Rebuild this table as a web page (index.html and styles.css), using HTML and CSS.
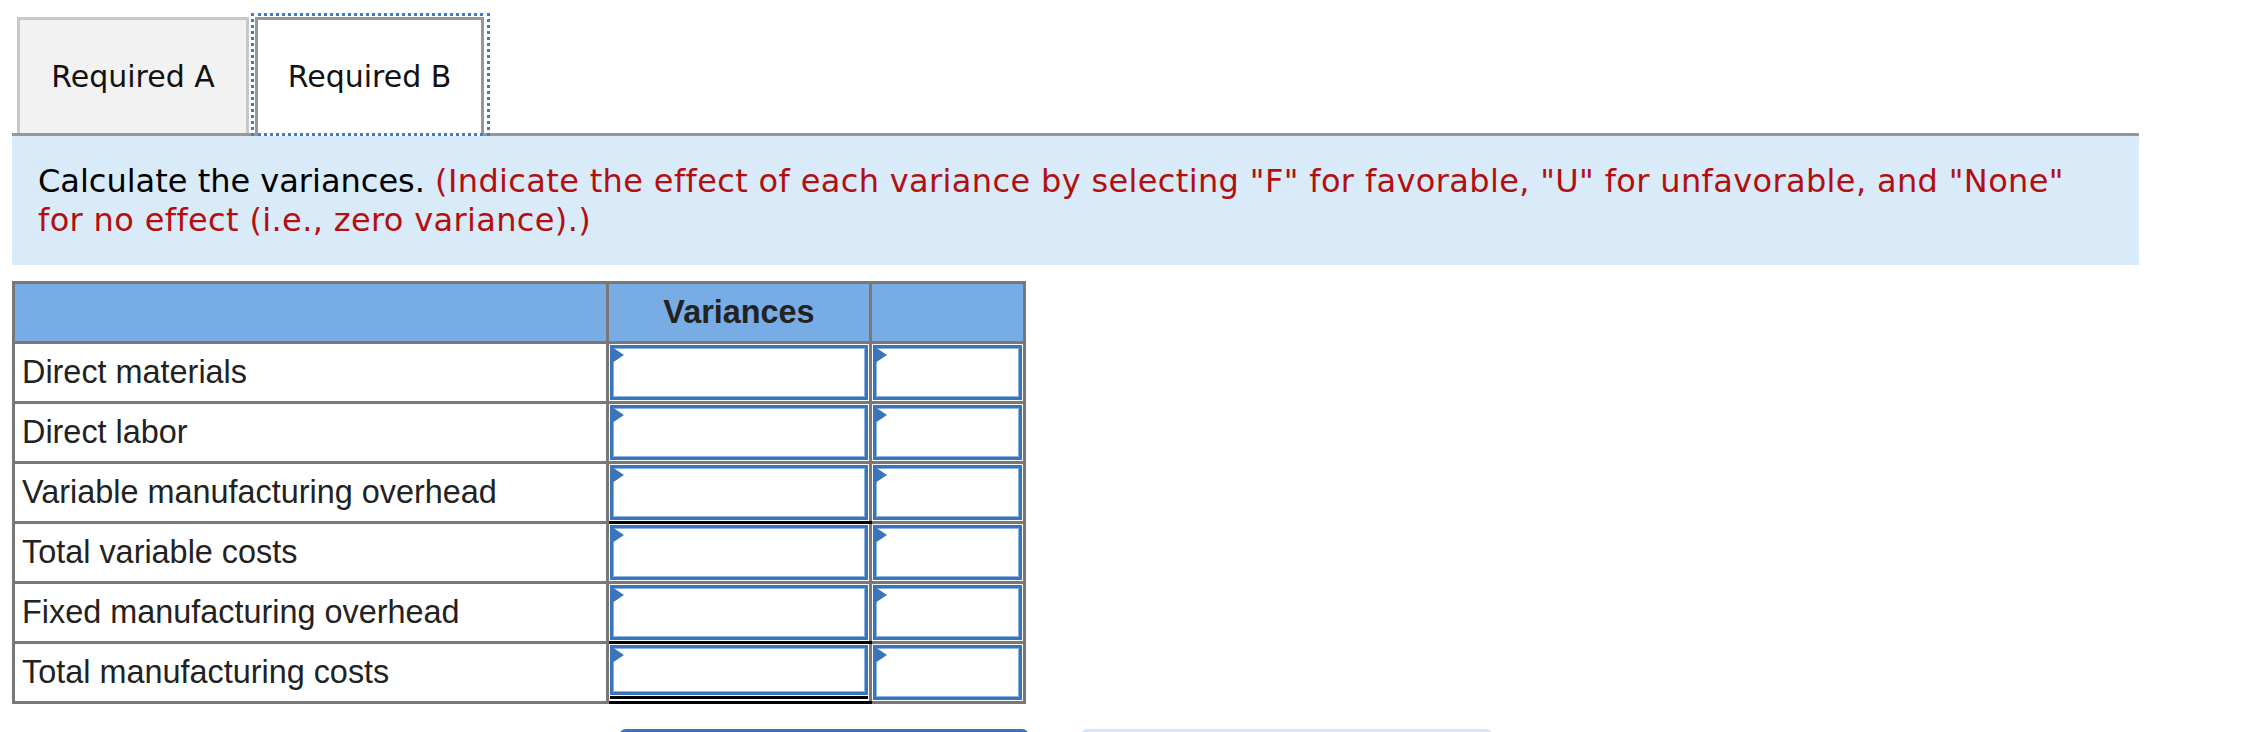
FILE: index.html
```html
<!DOCTYPE html>
<html lang="en">
<head>
<meta charset="utf-8">
<title>Variances</title>
<link rel="stylesheet" href="styles.css">
</head>
<body>
<div class="page">
  <div class="tabs">
    <div class="tab">Required A</div>
    <div class="tab tab-active">Required B</div>
  </div>
  <div class="panel">
    <p class="prompt">Calculate the variances. <span class="hint">(Indicate the effect of each variance by selecting "F" for favorable, "U" for unfavorable, and "None" for no effect (i.e., zero variance).)</span></p>
  </div>
  <table class="grid">
    <colgroup>
      <col class="c-label">
      <col class="c-amt">
      <col class="c-fu">
    </colgroup>
    <thead>
      <tr>
        <th></th>
        <th>Variances</th>
        <th></th>
      </tr>
    </thead>
    <tbody>
      <tr>
        <td class="label">Direct materials</td>
        <td class="cell"><div class="inp"></div></td>
        <td class="cell"><div class="inp"></div></td>
      </tr>
      <tr>
        <td class="label">Direct labor</td>
        <td class="cell"><div class="inp"></div></td>
        <td class="cell"><div class="inp"></div></td>
      </tr>
      <tr>
        <td class="label">Variable manufacturing overhead</td>
        <td class="cell rule-below"><div class="inp"></div></td>
        <td class="cell"><div class="inp"></div></td>
      </tr>
      <tr>
        <td class="label">Total variable costs</td>
        <td class="cell"><div class="inp"></div></td>
        <td class="cell"><div class="inp"></div></td>
      </tr>
      <tr>
        <td class="label">Fixed manufacturing overhead</td>
        <td class="cell rule-below"><div class="inp"></div></td>
        <td class="cell"><div class="inp"></div></td>
      </tr>
      <tr>
        <td class="label">Total manufacturing costs</td>
        <td class="cell rule-below"><div class="inp inp-double"></div></td>
        <td class="cell"><div class="inp"></div></td>
      </tr>
    </tbody>
  </table>
  <div class="actions">
    <div class="btn btn-primary"></div>
    <div class="btn btn-secondary"></div>
  </div>
</div>
</body>
</html>
```

FILE: styles.css
```css
html, body {
  margin: 0;
  padding: 0;
  background: #ffffff;
}

body {
  overflow: hidden;
}

.page {
  padding: 17px 0 0 12px;
}

/* Tabs */
.tabs {
  display: flex;
  align-items: flex-end;
  gap: 6px;
  width: 2122px;
  padding-left: 5px;
  border-bottom: 3px solid #979797;
  height: 116px;
}

.tab {
  box-sizing: border-box;
  width: 232px;
  height: 116px;
  display: flex;
  align-items: center;
  justify-content: center;
  border: 3px solid #c8c8c8;
  border-bottom: none;
  background: #f2f2f2;
  font-family: "DejaVu Sans", Verdana, sans-serif;
  font-size: 30px;
  color: #111111;
}

.tab-active {
  position: relative;
  width: 229px;
  height: 119px;
  margin-bottom: -3px;
  padding-bottom: 3px;
  border-color: #979797;
  background: #ffffff;
}

.tab-active::after {
  content: "";
  position: absolute;
  top: -7px;
  left: -7px;
  right: -9px;
  bottom: 0;
  border: 3px dotted #3b7bc8;
}

/* Instruction panel */
.panel {
  box-sizing: border-box;
  width: 2127px;
  background: #d9eaf8;
  padding: 26px 50px 25px 26px;
}

.prompt {
  margin: 0;
  font-family: "DejaVu Sans", Verdana, sans-serif;
  font-size: 32px;
  line-height: 39px;
  color: #000000;
}

.hint {
  color: #b30f10;
  letter-spacing: 0.36px;
}

/* Table */
.grid {
  margin-top: 16px;
  border-collapse: collapse;
  table-layout: fixed;
  width: 1014px;
  font-family: "Liberation Sans", Arial, sans-serif;
  font-size: 32.4px;
  color: #222222;
}

.c-label { width: 594px; }
.c-amt { width: 263px; }
.c-fu { width: 154px; }

.grid th,
.grid td {
  border: 3px solid #787878;
  padding: 0;
  height: 57px;
  vertical-align: middle;
}

.grid th {
  background: #78ace4;
  font-weight: bold;
  text-align: center;
  color: #222222;
}

.grid td.label {
  padding-left: 7px;
  white-space: nowrap;
  background: #ffffff;
}

.grid td.rule-below {
  border-bottom: 3px solid #000000;
}

.inp {
  position: relative;
  box-sizing: border-box;
  height: 55px;
  margin: 1px 1px;
  border: 3px solid #3a75ba;
  box-shadow: inset 0 0 0 1px #8db3e2;
  background: #ffffff;
}

.inp-double {
  height: 50px;
  margin-bottom: 6px;
  box-shadow: inset 0 0 0 1px #8db3e2, 0 1px 0 #ffffff, 0 4px 0 #000000;
}

.inp::before {
  content: "";
  position: absolute;
  top: -1px;
  left: -1px;
  width: 0;
  height: 0;
  border-top: 8px solid transparent;
  border-bottom: 8px solid transparent;
  border-left: 12px solid #3a75ba;
}

/* Bottom buttons */
.actions {
  display: flex;
  gap: 51px;
  margin-top: 25px;
  padding-left: 607px;
}

.btn {
  height: 44px;
  border-radius: 7px;
}

.btn-primary {
  width: 410px;
  background: #3873b9;
}

.btn-secondary {
  width: 413px;
  background: #dbe6f3;
}
```
